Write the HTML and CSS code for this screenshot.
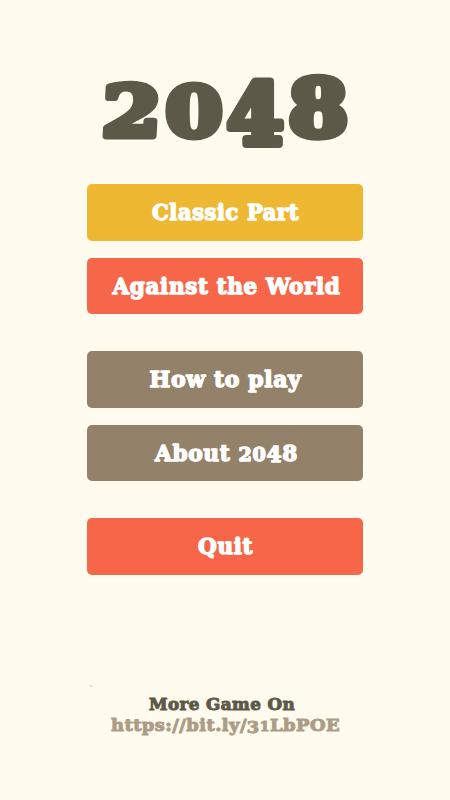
FILE: index.html
```html
<!DOCTYPE html>
<html lang="en">
<head>
<meta charset="utf-8">
<title>2048</title>
<link rel="stylesheet" href="styles.css">
</head>
<body>
<main class="screen">
  <h1 class="title">
    <svg class="title-art" viewBox="0 0 260 90" role="img" aria-label="2048">
      <text transform="translate(6 70.5) skewX(-3) scale(1.18 .97)">2</text>
      <text transform="translate(70.5 70.5) scale(1.14 .97)">0</text>
      <text transform="translate(132 78.5) scale(1.13 1.17)">4</text>
      <text transform="translate(193.5 70.5) scale(1.19 1.08)">8</text>
    </svg>
  </h1>
  <nav class="menu">
    <button class="btn gold"><svg class="label" viewBox="0 0 276 56"><text x="65" y="35.5" textLength="147" lengthAdjust="spacingAndGlyphs">Classic Part</text></svg></button>
    <button class="btn red"><svg class="label" viewBox="0 0 276 56"><text x="25.5" y="35.5" textLength="228" lengthAdjust="spacingAndGlyphs">Against the World</text></svg></button>
    <button class="btn brown spaced"><svg class="label" viewBox="0 0 276 56"><text x="62.5" y="35.5" textLength="152" lengthAdjust="spacingAndGlyphs">How to play</text></svg></button>
    <button class="btn brown"><svg class="label" viewBox="0 0 276 56"><text x="68" y="35.5" textLength="143" lengthAdjust="spacingAndGlyphs">About <tspan class="low">20</tspan><tspan dy="1.5">4</tspan><tspan dy="-1.5">8</tspan></text></svg></button>
    <button class="btn red spaced"><svg class="label" viewBox="0 0 276 56"><text x="111" y="35" textLength="55" lengthAdjust="spacingAndGlyphs">Quit</text></svg></button>
  </nav>
  <footer class="more">
    <svg class="more-art" viewBox="0 0 276 60">
      <path class="speck" d="M2 1.5 6 2.5"/>
      <text class="dark" x="62" y="26" textLength="146" lengthAdjust="spacingAndGlyphs">More Game On</text>
      <text class="link" x="24" y="46.5" textLength="229" lengthAdjust="spacingAndGlyphs">https://bit.ly/<tspan dy="2">3</tspan><tspan class="one" dy="-2">1</tspan>LbPOE</text>
    </svg>
  </footer>
</main>
</body>
</html>
```
FILE: styles.css
```css
body {
  margin: 0;
  background: #fffbee;
  font-family: "DejaVu Serif", serif;
  font-weight: 700;
}
.screen {
  height: 800px;
  box-sizing: border-box;
  padding-top: 65px;
  display: flex;
  flex-direction: column;
  align-items: center;
  overflow: hidden;
}
svg {
  display: block;
  overflow: visible;
}
.title {
  margin: 0 0 29px;
}
.title-art {
  width: 260px;
  height: 90px;
  font-size: 72px;
  fill: #5d5948;
  stroke: #5d5948;
  stroke-width: 7px;
  stroke-linejoin: round;
}
.menu {
  display: flex;
  flex-direction: column;
  gap: 17px;
}
.btn {
  width: 276px;
  height: 56.6px;
  padding: 0;
  border: 0;
  border-radius: 5px;
  font: inherit;
}
.spaced {
  margin-top: 20px;
}
.gold { background: #eeb833; }
.red { background: #f8664a; }
.brown { background: #948169; }
.label {
  width: 276px;
  height: 56px;
  font-size: 21.5px;
  fill: #fff;
  stroke: #fff;
  stroke-width: 1.4px;
  stroke-linejoin: round;
  letter-spacing: 0.6px;
}
.low {
  font-size: 19px;
}
.more {
  margin-top: 109px;
}
.more-art {
  width: 276px;
  height: 60px;
  font-size: 16.5px;
  letter-spacing: 0.4px;
  stroke-width: 1px;
  stroke-linejoin: round;
}
.one {
  font-size: 13px;
}
.dark {
  fill: #5d5948;
  stroke: #5d5948;
}
.link {
  fill: #ad9d87;
  stroke: #ad9d87;
}
.speck {
  fill: none;
  stroke: #d8d2c3;
}
```
